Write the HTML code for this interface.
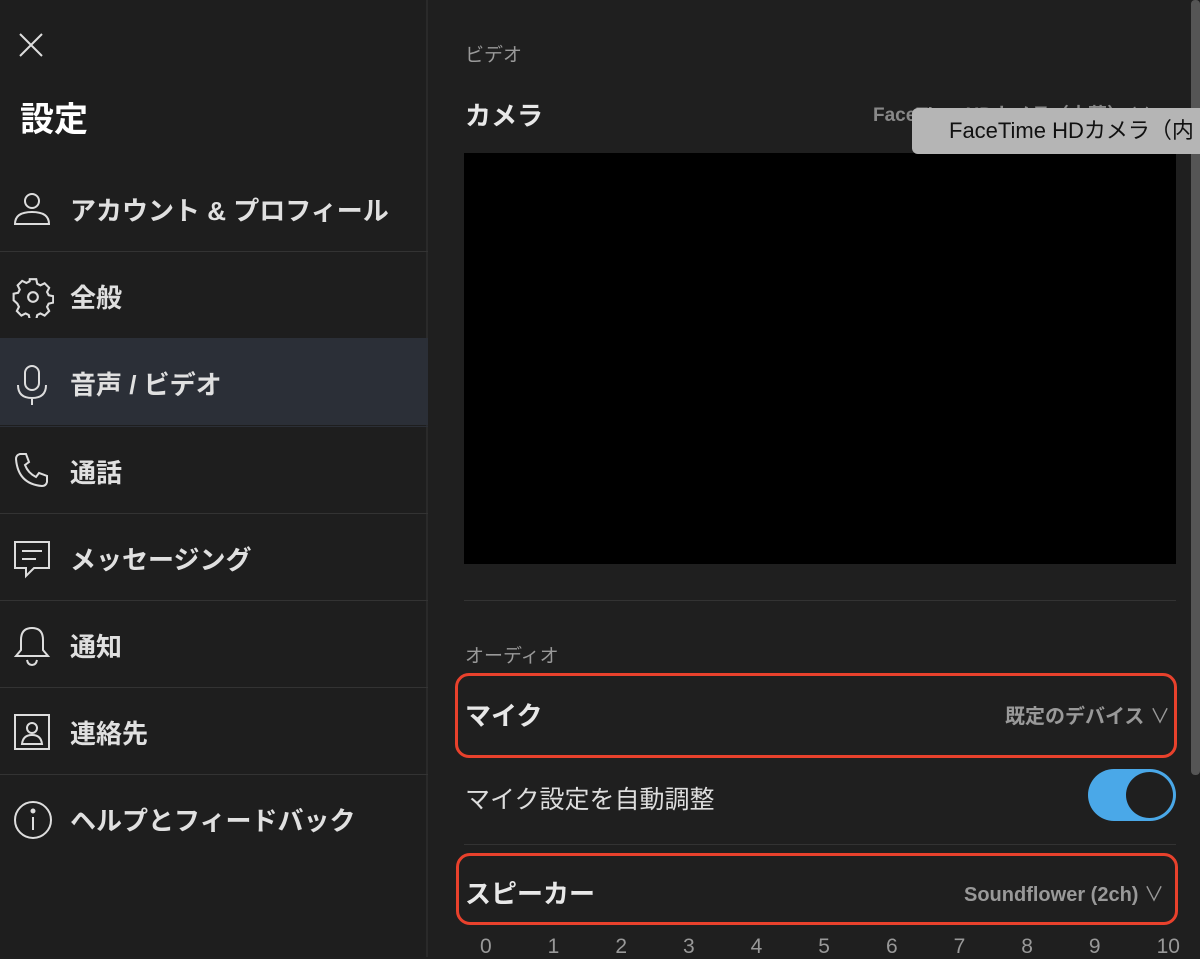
<!DOCTYPE html><html><head><meta charset="utf-8"><style>
*{margin:0;padding:0;box-sizing:border-box}
body{width:1200px;height:957px;background:#1f1f1f;overflow:hidden;position:relative;font-family:"Liberation Sans","Noto Sans CJK JP",sans-serif;color:#ddd}
.a{position:absolute}
.side{left:0;top:0;width:428px;height:957px;background:#1e1e1e;border-right:2px solid #2a2a2a}
.row{position:absolute;left:0;width:428px;height:87px;border-top:1px solid #333}
.row .t{position:absolute;left:70px;top:3px;line-height:87px;font-size:26px;font-weight:bold;color:#e0e0e0}
.row svg{position:absolute;left:12px;top:24px}
.b{font-weight:bold}
</style></head><body>
<div class="a side">
<svg class="a" style="left:18px;top:32px" width="26" height="26" viewBox="0 0 26 26"><path d="M2 2L24 24M24 2L2 24" stroke="#ddd" stroke-width="2"/></svg>
<div class="a b" style="left:20px;top:92px;font-size:34px;color:#fff">設定</div>
<div class="row" style="top:165px;border-top:none"><svg width="40" height="40" viewBox="0 0 40 40" fill="none" stroke="#ddd" stroke-width="2"><circle cx="20" cy="12" r="7"/><path d="M3 35Q3 23 20 23Q37 23 37 35Z"/></svg><div class="t">アカウント &amp; プロフィール</div></div>
<div class="row" style="top:251px"><svg width="42" height="42" viewBox="-1 -1 26 26" fill="none" stroke="#ddd" stroke-width="1.3"><circle cx="12" cy="12" r="3"/><path d="M10 1h4l.6 2.8 2 1 2.6-1.3 2.8 2.8-1.3 2.6 1 2 2.8.6v4l-2.8.6-1 2 1.3 2.6-2.8 2.8-2.6-1.3-2 1-.6 2.8h-4l-.6-2.8-2-1-2.6 1.3-2.8-2.8 1.3-2.6-1-2L0 14v-4l2.8-.6 1-2-1.3-2.6 2.8-2.8 2.6 1.3 2-1z"/></svg><div class="t">全般</div></div>
<div class="row" style="top:338px;background:#2b2f37;border-top:1px solid #2b2f37"><svg width="40" height="44" viewBox="0 0 40 44" fill="none" stroke="#ddd" stroke-width="2"><rect x="13" y="3" width="14" height="24" rx="7"/><path d="M6 22q0 13 14 13q14 0 14-13M20 35v7"/></svg><div class="t">音声 / ビデオ</div></div>
<div class="row" style="top:426px;border-top:1px solid #2b2f37"><svg width="40" height="40" viewBox="0 0 40 40" fill="none" stroke="#ddd" stroke-width="2"><path d="M8 3l6 0 3 8-4 3q3 8 11 12l3-4 8 3v6q-1 4-5 4Q6 33 4 8q0-4 4-5z"/></svg><div class="t">通話</div></div>
<div class="row" style="top:513px"><svg width="40" height="42" viewBox="0 0 40 42" fill="none" stroke="#ddd" stroke-width="2"><path d="M3 4h34v26H22l-8 8v-8H3z"/><path d="M10 13h20M10 21h14"/></svg><div class="t">メッセージング</div></div>
<div class="row" style="top:600px"><svg width="40" height="42" viewBox="0 0 40 42" fill="none" stroke="#ddd" stroke-width="2"><path d="M20 3q-11 0-11 12v10l-5 6h32l-5-6V15Q31 3 20 3zM15 35q1 5 5 5t5-5"/></svg><div class="t">通知</div></div>
<div class="row" style="top:687px"><svg width="40" height="42" viewBox="0 0 40 42" fill="none" stroke="#ddd" stroke-width="2"><rect x="3" y="3" width="34" height="34"/><circle cx="20" cy="16" r="5"/><path d="M10 32q1-9 10-9t10 9z"/></svg><div class="t">連絡先</div></div>
<div class="row" style="top:774px"><svg width="42" height="42" viewBox="0 0 42 42" fill="none" stroke="#ddd" stroke-width="2"><circle cx="21" cy="21" r="18"/><path d="M21 18v13"/><circle cx="21" cy="12" r="1.5" fill="#ddd"/></svg><div class="t">ヘルプとフィードバック</div></div>
</div>
<div class="a" style="left:1191px;top:0;width:9px;height:775px;background:#555;border-radius:4px"></div>
<div class="a" style="left:465px;top:40px;font-size:19px;color:#999">ビデオ</div>
<div class="a b" style="left:465px;top:96px;font-size:26px;color:#e8e8e8">カメラ</div>
<div class="a b" style="left:873px;top:100px;font-size:19px;color:#888">FaceTime HDカメラ（内蔵） ∨</div>
<div class="a" style="left:464px;top:153px;width:712px;height:411px;background:#000"></div>
<div class="a" style="left:912px;top:108px;width:300px;height:46px;background:#b5b5b5;border-radius:6px;color:#111;font-size:22px;line-height:46px;padding-left:37px;white-space:nowrap">FaceTime HDカメラ（内</div>
<div class="a" style="left:464px;top:600px;width:712px;height:1px;background:#333"></div>
<div class="a" style="left:465px;top:641px;font-size:19px;color:#999">オーディオ</div>
<div class="a" style="left:455px;top:673px;width:722px;height:85px;border:3px solid #e8412c;border-radius:14px"></div>
<div class="a b" style="left:465px;top:696px;font-size:26px;color:#e8e8e8">マイク</div>
<div class="a b" style="left:1005px;top:700px;font-size:20px;color:#999">既定のデバイス <span style="font-weight:normal">∨</span></div>
<div class="a" style="left:465px;top:780px;font-size:25px;color:#ddd">マイク設定を自動調整</div>
<div class="a" style="left:1088px;top:769px;width:88px;height:52px;border-radius:26px;background:#4aa8e8"></div>
<div class="a" style="left:1126px;top:772px;width:47px;height:46px;border-radius:50%;background:#1f1f1f"></div>
<div class="a" style="left:464px;top:844px;width:712px;height:1px;background:#333"></div>
<div class="a" style="left:456px;top:853px;width:722px;height:72px;border:3px solid #e8412c;border-radius:14px"></div>
<div class="a b" style="left:465px;top:874px;font-size:26px;color:#e8e8e8">スピーカー</div>
<div class="a b" style="left:964px;top:878px;font-size:20px;color:#999">Soundflower (2ch) <span style="font-weight:normal">∨</span></div>
<div class="a" style="left:480px;top:935px;width:700px;font-size:21px;color:#999;display:flex;justify-content:space-between"><span>0</span><span>1</span><span>2</span><span>3</span><span>4</span><span>5</span><span>6</span><span>7</span><span>8</span><span>9</span><span>10</span></div>
</body></html>
